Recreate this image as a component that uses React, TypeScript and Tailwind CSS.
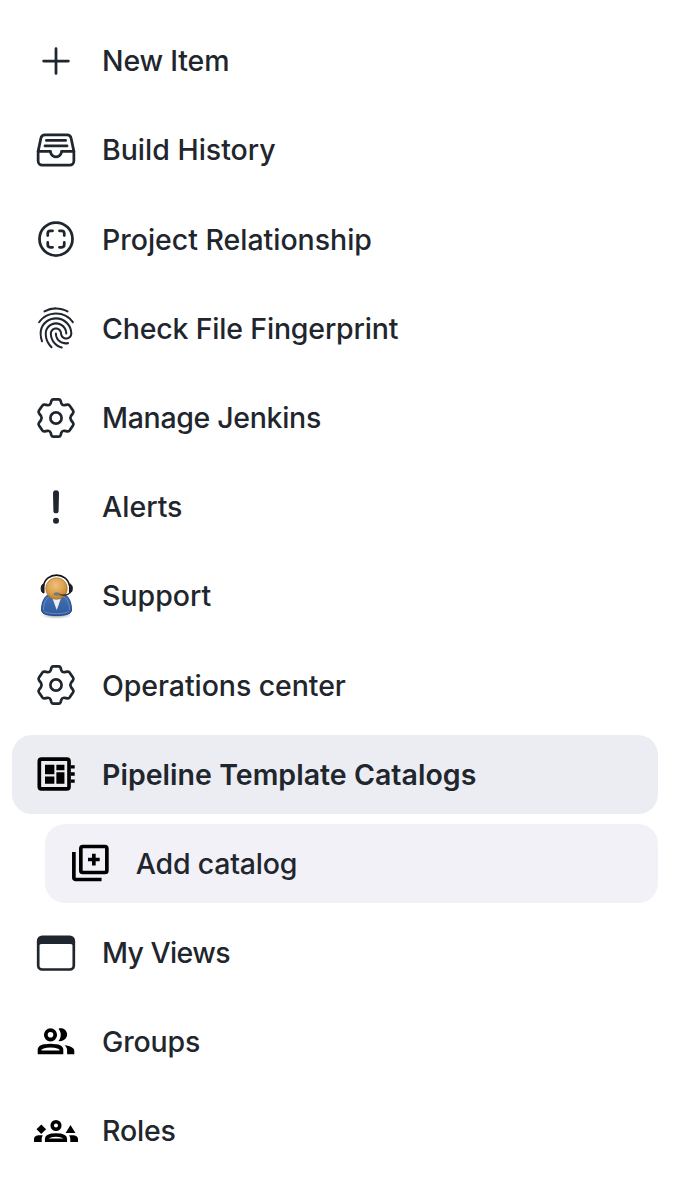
import type { ReactNode } from "react";
import {
  IoAddOutline,
  IoFileTrayFullOutline,
  IoFingerPrintOutline,
  IoScanCircleOutline,
} from "react-icons/io5";

function GearIcon() {
  return (
    <svg viewBox="0 0 44 44" className="size-11" fill="none" stroke="currentColor" strokeWidth="2.700" strokeLinejoin="round">
      <path d="M19.300 3.400H24.700Q26.100 3.400 26.600 4.800L27.300 7.200Q28.200 9.500 30.500 9.200L33.400 8.700Q35 8.400 35.900 9.900L39 14.500Q40 16 38.900 17.400L37 19.900Q35.700 22 37 24.100L38.900 26.600Q40 28 39 29.500L35.900 34.100Q35 35.600 33.400 35.300L30.500 34.800Q28.200 34.500 27.300 36.800L26.600 39.200Q26.100 40.600 24.700 40.600H19.300Q17.900 40.600 17.400 39.200L16.700 36.800Q15.800 34.500 13.500 34.800L10.600 35.300Q9 35.600 8.100 34.100L5 29.500Q4 28 5.100 26.600L7 24.100Q8.300 22 7 19.900L5.100 17.400Q4 16 5 14.500L8.100 9.900Q9 8.400 10.600 8.700L13.500 9.200Q15.800 9.500 16.700 7.200L17.400 4.800Q17.900 3.400 19.300 3.400Z" />
      <circle cx="22" cy="22" r="5.600" />
    </svg>
  );
}

function AlertIcon() {
  return (
    <svg viewBox="0 0 44 44" className="size-11" fill="currentColor">
      <path d="M19 8.200a3 3 0 0 1 6 0l-.4 17.500a2.600 2.600 0 0 1-5.200 0Z" />
      <circle cx="22" cy="35.700" r="3" />
    </svg>
  );
}

function BoardIcon() {
  return (
    <svg viewBox="0 0 24 24" className="size-11 text-black" fill="currentColor">
      <rect x="2.900" y="3.900" width="16.200" height="16.200" rx="1.200" fill="none" stroke="currentColor" strokeWidth="2" />
      <path d="M6 6.900h5.100v5.300H6ZM12.200 6.900h4.400V10h-4.400ZM6 13.300h5.100v4H6ZM12.200 11.100h4.400v6.200h-4.400Z" />
      <path d="M20 7.200h2.200V9H20ZM20 11.100h2.200v1.800H20ZM20 15h2.200v1.800H20Z" />
    </svg>
  );
}

function AddCatalogIcon() {
  return (
    <svg viewBox="0 0 24 24" className="size-11 text-black" fill="none" stroke="currentColor" strokeWidth="2">
      <rect x="7" y="3" width="14.200" height="14.200" rx="1.100" />
      <path d="M3.200 6v14a1 1 0 0 0 1 1h14.100M14.100 6.900v6.400M10.900 10.100h6.400" />
    </svg>
  );
}

function SupportIcon() {
  return (
    <svg viewBox="0 0 44 48" className="h-12 w-11">
      <defs>
        <radialGradient id="face" cx="45%" cy="35%" r="65%">
          <stop offset="0" stopColor="#efc07c" />
          <stop offset="0.6" stopColor="#dba14e" />
          <stop offset="1" stopColor="#bd7f30" />
        </radialGradient>
        <linearGradient id="suit" x1="0" y1="0" x2="0" y2="1">
          <stop offset="0" stopColor="#4471b4" />
          <stop offset="1" stopColor="#315b9d" />
        </linearGradient>
        <radialGradient id="shade">
          <stop offset="0" stopColor="#555" stopOpacity="0.6" />
          <stop offset="1" stopColor="#777" stopOpacity="0" />
        </radialGradient>
      </defs>
      <ellipse cx="22.500" cy="43.500" rx="16" ry="3.500" fill="url(#shade)" />
      <path d="M7.500 38c0-8 3-14 8-16h13c6 1 9 8 9 16 0 4.500-6.500 5.500-15 5.500S7.500 42.500 7.500 38Z" fill="url(#suit)" stroke="#234a8c" />
      <path d="M9.500 38c0-6 2-11 5.500-13M35.500 38c0-6-2-11-5.500-13M10 39c2 3.500 23 3.500 25 0" fill="none" stroke="#7199d0" strokeWidth="0.700" />
      <path d="m18 25 4.700 13L27.500 25Z" fill="#eceef3" />
      <circle cx="22.500" cy="16.500" r="10.800" fill="url(#face)" stroke="#a06c26" strokeWidth="0.600" />
      <path d="M9.500 14C11.500-.5 33.500-.5 35.500 14" fill="none" stroke="#111" strokeWidth="1.600" />
      <path d="M10 12c-3.500-.5-4 9 0 9ZM35.500 12c3.500-.5 4 9 0 9Z" fill="#222" stroke="#111" />
      <path d="M36 20c-1 3-6 3.500-11 2.500" fill="none" stroke="#222" strokeWidth="1.200" />
      <ellipse cx="22.800" cy="22" rx="3.300" ry="1.700" fill="#777a7b" />
    </svg>
  );
}

function WindowIcon() {
  return (
    <svg viewBox="0 0 44 44" className="size-11">
      <rect x="4.200" y="5.900" width="35.600" height="32.600" rx="4" fill="none" stroke="currentColor" strokeWidth="2.700" />
      <path d="M4.500 15V9a4 4 0 0 1 4-4h27a4 4 0 0 1 4 4v6q-.8-2-3-2h-29q-2.200 0-3 2Z" fill="currentColor" />
    </svg>
  );
}

function GroupsIcon() {
  return (
    <svg viewBox="0 0 44 44" className="size-11 text-black">
      <circle cx="16.500" cy="14.800" r="4.700" fill="none" stroke="currentColor" strokeWidth="3.800" />
      <path d="M24.500 8.700c9-2.500 12.500 10 3 12.400-1 .2-2 .2-3-.2 3-3.500 3-8.500 0-12.200Z" fill="currentColor" />
      <path d="M5.600 32.300v-2.500c0-5.500 21.800-5.500 21.800 0v2.500Z" fill="none" stroke="currentColor" strokeWidth="3.800" />
      <path d="M30.500 25.200c6 .5 9.800 2.800 9.800 5.500v3.500h-7.200v-4c0-2-1-3.700-2.600-5Z" fill="currentColor" />
    </svg>
  );
}

function RolesIcon() {
  return (
    <svg viewBox="0 0 44 44" className="size-11 text-black">
      <circle cx="22" cy="16.500" r="3.800" fill="none" stroke="currentColor" strokeWidth="3.500" />
      <path d="m7.300 15.400 4.800 4.800-4.800 4.800-4.800-4.800ZM36.500 16l4.900 8h-9.800Z" fill="currentColor" />
      <path d="M12.700 31.300v-1.500c0-5 18.600-5 18.600 0v1.500Z" fill="none" stroke="currentColor" strokeWidth="3.500" />
      <path d="M0 33v-3c0-3.500 4-4.500 9-3.500-1 1-1.300 2.500-1.300 3.500v3ZM44 33v-3c0-3.500-4-4.500-9-3.500 1 1 1.300 2.500 1.300 3.500v3Z" fill="currentColor" />
    </svg>
  );
}

interface Item {
  label: string;
  icon: ReactNode;
  row?: string;
  text?: string;
}

const items: Item[] = [
  { label: "New Item", icon: <IoAddOutline className="size-11" />, text: "font-medium tracking-[-0.180px]" },
  { label: "Build History", icon: <IoFileTrayFullOutline className="size-11" /> },
  { label: "Project Relationship", icon: <IoScanCircleOutline className="size-11" />, text: "pt-[1px] font-medium tracking-[-0.020px]" },
  { label: "Check File Fingerprint", icon: <IoFingerPrintOutline className="size-11" />, text: "font-medium tracking-[-0.180px]" },
  { label: "Manage Jenkins", icon: <GearIcon />, text: "font-medium tracking-[-0.320px]" },
  { label: "Alerts", icon: <AlertIcon /> },
  { label: "Support", icon: <SupportIcon /> },
  { label: "Operations center", icon: <GearIcon />, text: "pt-[1px] font-medium tracking-[-0.070px]" },
  {
    label: "Pipeline Template Catalogs",
    icon: <BoardIcon />,
    row: "bg-[#ecedf3]",
    text: "pt-[1px] font-semibold tracking-[0.030px]",
  },
  {
    label: "Add catalog",
    icon: <AddCatalogIcon />,
    row: "ml-[33px] pl-[22.700px] bg-[#f2f1f7]",
    text: "font-medium tracking-[-0.200px]",
  },
  { label: "My Views", icon: <WindowIcon />, text: "font-medium tracking-[-0.600px]" },
  { label: "Groups", icon: <GroupsIcon />, text: "font-medium tracking-[-0.150px]" },
  { label: "Roles", icon: <RolesIcon />, text: "font-medium tracking-[-0.150px]" },
];

export default function App() {
  return (
    <nav className="h-[1192px] w-[694px] bg-white pt-[21.700px] pr-9 pl-3 font-['Inter','Liberation_Sans',sans-serif] text-[#1f262d]">
      <ul className="flex flex-col gap-[10.500px]">
        {items.map(({ label, icon, row = "pl-[22px]", text = "font-medium" }) => (
          <li key={label} className={`flex h-[78.660px] items-center rounded-[20px] ${row.includes("pl-") ? row : `pl-[22px] ${row}`}`}>
            <span className="flex w-11 shrink-0 items-center justify-center">{icon}</span>
            <span className="ml-6 pt-[0.800px] text-[28.500px] leading-none whitespace-nowrap">
              <span className={`block ${text}`}>{label}</span>
            </span>
          </li>
        ))}
      </ul>
    </nav>
  );
}
